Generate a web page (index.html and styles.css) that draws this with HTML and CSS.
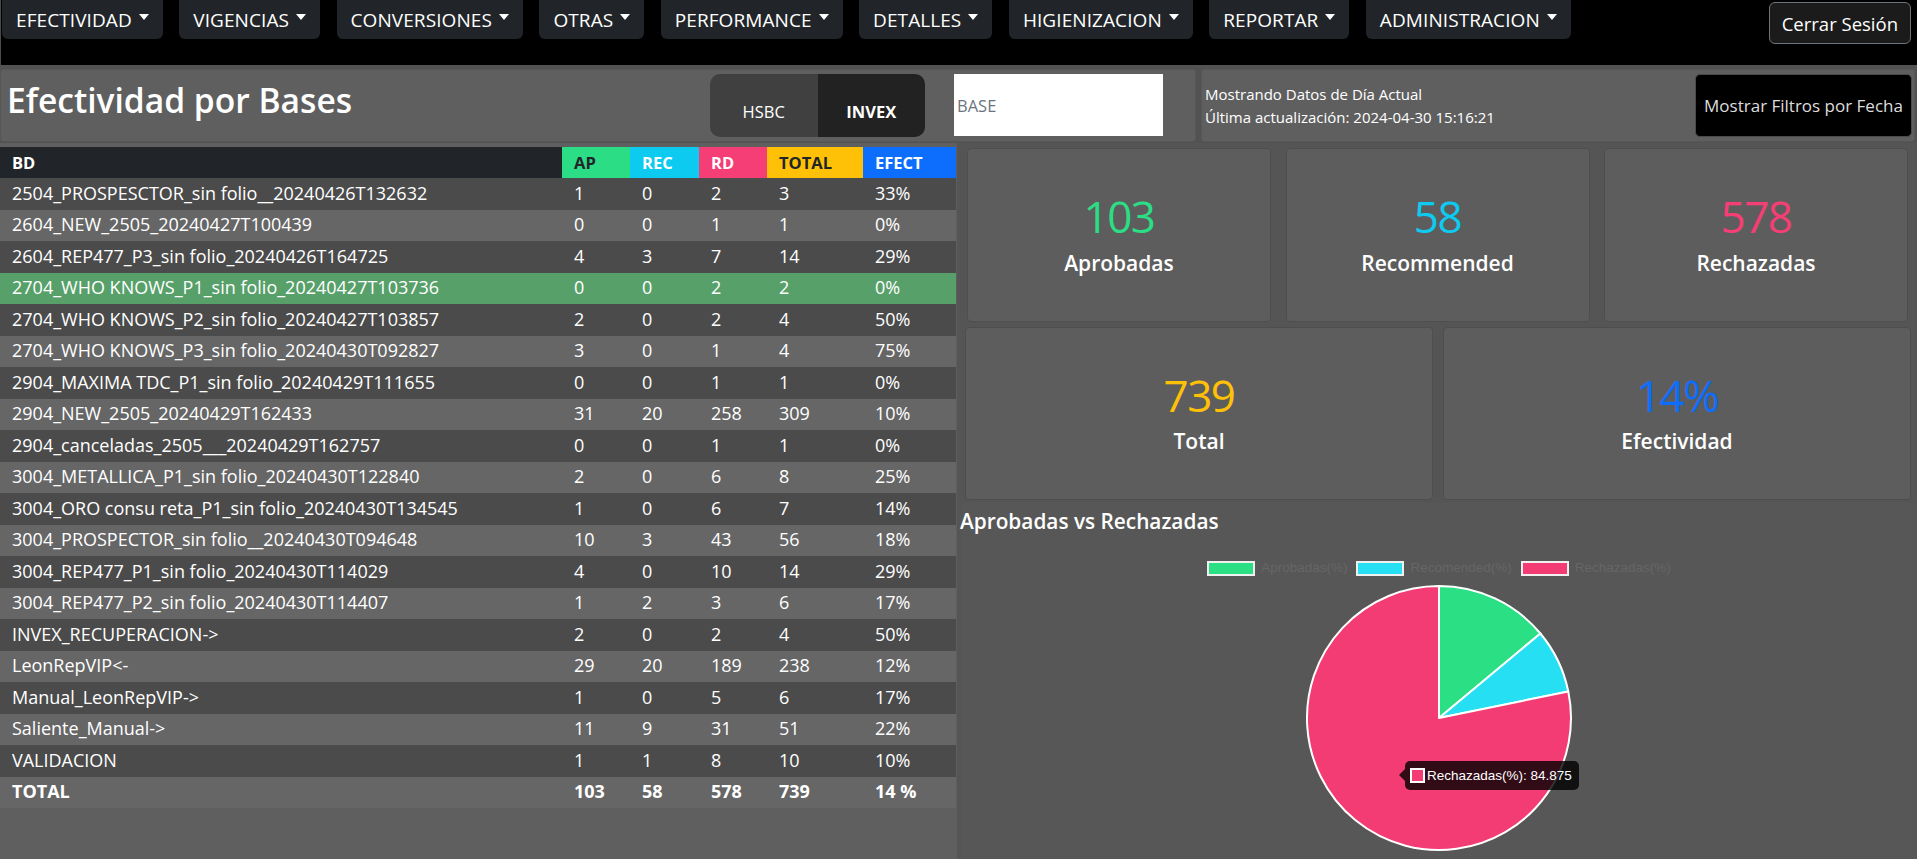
FILE: index.html
```html
<!DOCTYPE html>
<html lang="es">
<head>
<meta charset="utf-8">
<title>Efectividad por Bases</title>
<link rel="stylesheet" href="styles.css">
</head>
<body>
<nav class="topbar">
  <div class="menu">
    <button class="menu-btn">EFECTIVIDAD<span class="caret"></span></button>
    <button class="menu-btn">VIGENCIAS<span class="caret"></span></button>
    <button class="menu-btn">CONVERSIONES<span class="caret"></span></button>
    <button class="menu-btn">OTRAS<span class="caret"></span></button>
    <button class="menu-btn">PERFORMANCE<span class="caret"></span></button>
    <button class="menu-btn">DETALLES<span class="caret"></span></button>
    <button class="menu-btn">HIGIENIZACION<span class="caret"></span></button>
    <button class="menu-btn">REPORTAR<span class="caret"></span></button>
    <button class="menu-btn">ADMINISTRACION<span class="caret"></span></button>
  </div>
  <button class="logout">Cerrar Sesión</button>
</nav>

<header class="header">
  <div class="panel title-panel">
    <h1 class="page-title">Efectividad por Bases</h1>
    <div class="toggle">
      <span class="toggle-opt">HSBC</span>
      <span class="toggle-opt active">INVEX</span>
    </div>
    <input class="base-input" type="text" placeholder="BASE">
  </div>
  <div class="panel info-panel">
    <div class="info-text">
      <div>Mostrando Datos de Día Actual</div>
      <div>Última actualización: 2024-04-30 15:16:21</div>
    </div>
    <button class="filter-btn">Mostrar Filtros por Fecha</button>
  </div>
</header>

<main class="main">
  <section class="table-col">
    <table class="data-table">
      <colgroup>
        <col class="c-bd"><col class="c-ap"><col class="c-rec"><col class="c-rd"><col class="c-total"><col class="c-efect">
      </colgroup>
      <thead>
        <tr>
          <th class="h-bd">BD</th>
          <th class="h-ap">AP</th>
          <th class="h-rec">REC</th>
          <th class="h-rd">RD</th>
          <th class="h-total">TOTAL</th>
          <th class="h-efect">EFECT</th>
        </tr>
      </thead>
      <tbody>
        <tr><td>2504_PROSPESCTOR_sin folio__20240426T132632</td><td>1</td><td>0</td><td>2</td><td>3</td><td>33%</td></tr>
        <tr><td>2604_NEW_2505_20240427T100439</td><td>0</td><td>0</td><td>1</td><td>1</td><td>0%</td></tr>
        <tr><td>2604_REP477_P3_sin folio_20240426T164725</td><td>4</td><td>3</td><td>7</td><td>14</td><td>29%</td></tr>
        <tr class="hover"><td>2704_WHO KNOWS_P1_sin folio_20240427T103736</td><td>0</td><td>0</td><td>2</td><td>2</td><td>0%</td></tr>
        <tr><td>2704_WHO KNOWS_P2_sin folio_20240427T103857</td><td>2</td><td>0</td><td>2</td><td>4</td><td>50%</td></tr>
        <tr><td>2704_WHO KNOWS_P3_sin folio_20240430T092827</td><td>3</td><td>0</td><td>1</td><td>4</td><td>75%</td></tr>
        <tr><td>2904_MAXIMA TDC_P1_sin folio_20240429T111655</td><td>0</td><td>0</td><td>1</td><td>1</td><td>0%</td></tr>
        <tr><td>2904_NEW_2505_20240429T162433</td><td>31</td><td>20</td><td>258</td><td>309</td><td>10%</td></tr>
        <tr><td>2904_canceladas_2505___20240429T162757</td><td>0</td><td>0</td><td>1</td><td>1</td><td>0%</td></tr>
        <tr><td>3004_METALLICA_P1_sin folio_20240430T122840</td><td>2</td><td>0</td><td>6</td><td>8</td><td>25%</td></tr>
        <tr><td>3004_ORO consu reta_P1_sin folio_20240430T134545</td><td>1</td><td>0</td><td>6</td><td>7</td><td>14%</td></tr>
        <tr><td>3004_PROSPECTOR_sin folio__20240430T094648</td><td>10</td><td>3</td><td>43</td><td>56</td><td>18%</td></tr>
        <tr><td>3004_REP477_P1_sin folio_20240430T114029</td><td>4</td><td>0</td><td>10</td><td>14</td><td>29%</td></tr>
        <tr><td>3004_REP477_P2_sin folio_20240430T114407</td><td>1</td><td>2</td><td>3</td><td>6</td><td>17%</td></tr>
        <tr><td>INVEX_RECUPERACION-&gt;</td><td>2</td><td>0</td><td>2</td><td>4</td><td>50%</td></tr>
        <tr><td>LeonRepVIP&lt;-</td><td>29</td><td>20</td><td>189</td><td>238</td><td>12%</td></tr>
        <tr><td>Manual_LeonRepVIP-&gt;</td><td>1</td><td>0</td><td>5</td><td>6</td><td>17%</td></tr>
        <tr><td>Saliente_Manual-&gt;</td><td>11</td><td>9</td><td>31</td><td>51</td><td>22%</td></tr>
        <tr><td>VALIDACION</td><td>1</td><td>1</td><td>8</td><td>10</td><td>10%</td></tr>
        <tr class="total-row"><td>TOTAL</td><td>103</td><td>58</td><td>578</td><td>739</td><td>14 %</td></tr>
      </tbody>
    </table>
  </section>

  <section class="stats-col">
    <div class="cards">
      <div class="card-row three">
        <div class="card"><div class="num green">103</div><div class="label">Aprobadas</div></div>
        <div class="card"><div class="num cyan">58</div><div class="label">Recommended</div></div>
        <div class="card"><div class="num pink">578</div><div class="label">Rechazadas</div></div>
      </div>
      <div class="card-row two">
        <div class="card"><div class="num yellow">739</div><div class="label">Total</div></div>
        <div class="card"><div class="num blue">14%</div><div class="label">Efectividad</div></div>
      </div>
    </div>

    <div class="chart">
      <h2 class="chart-title">Aprobadas vs Rechazadas</h2>
      <div class="legend">
        <span class="legend-item"><span class="swatch sw-green"></span>Aprobadas(%)</span>
        <span class="legend-item"><span class="swatch sw-cyan"></span>Recomended(%)</span>
        <span class="legend-item"><span class="swatch sw-pink"></span>Rechazadas(%)</span>
      </div>
      <div class="pie-wrap">
        <svg class="pie" width="270" height="270" viewBox="0 0 270 270">
          <path d="M135,135 L135,3 A132,132 0 0 1 236.4,50.5 Z" fill="#2bdf84" stroke="#fff" stroke-width="2" stroke-linejoin="round"/>
          <path d="M135,135 L236.4,50.5 A132,132 0 0 1 264.3,108.5 Z" fill="#27dff3" stroke="#fff" stroke-width="2" stroke-linejoin="round"/>
          <path d="M135,135 L264.3,108.5 A132,132 0 1 1 135,3 Z" fill="#f33c73" stroke="#fff" stroke-width="2" stroke-linejoin="round"/>
        </svg>
      </div>
      <div class="tooltip"><span class="tip-box"></span>Rechazadas(%): 84.875</div>
    </div>
  </section>
</main>
</body>
</html>
```
FILE: styles.css
```css
* { box-sizing: border-box; }
html, body { margin: 0; padding: 0; }
body {
  width: 1917px;
  height: 859px;
  overflow: hidden;
  background: #555555;
  color: #fff;
  font-family: "Open Sans", "Noto Sans", sans-serif;
}

/* ---------- top bar ---------- */
.topbar {
  height: 65px;
  background: #000;
  display: flex;
  justify-content: space-between;
  align-items: flex-start;
  padding: 0 6px 0 1px;
  border-left: 1px solid #4a4a4a;
}
.menu { display: flex; gap: 16.5px; }
.menu-btn {
  font-family: inherit;
  font-size: 19px;
  letter-spacing: 0.08px;
  color: #fff;
  background: #212529;
  border: 0;
  height: 39px;
  padding: 0 14px 0 14px;
  border-radius: 0 0 6px 6px;
  display: flex;
  align-items: center;
  white-space: nowrap;
}
.caret {
  display: inline-block;
  width: 0; height: 0;
  margin-left: 7px;
  margin-bottom: 6px;
  border-left: 5px solid transparent;
  border-right: 5px solid transparent;
  border-top: 6px solid #fff;
}
.logout {
  margin-top: 2px;
  height: 42px;
  padding: 0 12px;
  font-family: inherit;
  font-size: 18.5px;
  color: #fff;
  background: #1b1b1b;
  border: 1px solid #6c757d;
  border-radius: 6px;
}

/* ---------- header ---------- */
.header {
  display: grid;
  grid-template-columns: 1196px 1fr;
  column-gap: 5px;
  height: 78px;
  padding: 4px 2px 1px 0;
  background: #525252;
}
.panel {
  background: #5f5f5f;
  border: 1px solid #575757;
  border-radius: 3px;
}
.title-panel {
  display: flex;
  align-items: flex-start;
  padding: 4px 32px 0 6px;
}
.page-title {
  flex: 1;
  margin: 6px 0 0 0;
  font-size: 33.6px;
  font-weight: 600;
  line-height: 1.2;
}
.toggle {
  display: flex;
  width: 215px;
  height: 63px;
  border-radius: 10px;
  overflow: hidden;
  margin-right: 29px;
}
.toggle-opt {
  flex: 1;
  display: flex;
  align-items: center;
  justify-content: center;
  padding-top: 13px;
  font-size: 16.5px;
  line-height: 24px;
  background: #404040;
  color: #fff;
}
.toggle-opt.active { background: #222222; font-weight: 700; }
.base-input {
  width: 209px;
  height: 62px;
  border: 0;
  background: #fff;
  padding: 0 3px;
  font-family: inherit;
  font-size: 16.5px;
  color: #333;
}
.base-input::placeholder { color: #6c757d; }

.info-panel {
  display: flex;
  justify-content: space-between;
  align-items: flex-start;
  padding: 4px 2px 0 3px;
}
.info-text {
  padding-top: 9px;
  font-size: 15px;
  line-height: 23px;
}
.filter-btn {
  width: 217px;
  height: 63px;
  background: #000;
  color: #ddd;
  border: 1px solid #4a4a4a;
  border-radius: 5px;
  font-family: inherit;
  font-size: 17px;
  padding: 0;
}

/* ---------- main ---------- */
.main {
  display: grid;
  grid-template-columns: 957px 1fr;
  column-gap: 4px;
  height: 716px;
}
.table-col {
  background: #5f5f5f;
  padding-top: 4px;
}
.data-table {
  width: 956px;
  border-collapse: collapse;
  table-layout: fixed;
  font-size: 18px;
}
.c-bd { width: 562px; }
.c-ap { width: 68px; }
.c-rec { width: 69px; }
.c-rd { width: 68px; }
.c-total { width: 96px; }
.c-efect { width: 93px; }
.data-table th {
  height: 31px;
  padding: 0 0 0 12px;
  text-align: left;
  font-size: 16.5px;
  font-weight: 700;
}
.data-table td {
  height: 31.5px;
  padding: 0 0 0 12px;
  white-space: nowrap;
  line-height: 1.2;
}
.h-bd { background: #212529; color: #fff; }
.h-ap { background: #2bdd84; color: #212529; }
.h-rec { background: #0dcaf0; color: #fff; }
.h-rd { background: #f53d76; color: #fff; }
.h-total { background: #ffc107; color: #212529; }
.h-efect { background: #0d6efd; color: #fff; }
.data-table tbody tr:nth-child(odd) { background: #4b4b4b; }
.data-table tbody tr:nth-child(even) { background: #666666; }
.data-table tbody tr.hover { background: #58a06a; }
.data-table tbody tr.total-row td { font-weight: 700; }

/* ---------- stats ---------- */
.stats-col {
  display: flex;
  flex-direction: column;
}
.cards {
  background: #555555;
  padding: 5px 0 3px 0;
  display: flex;
  flex-direction: column;
  gap: 5px;
}
.card-row { display: flex; }
.card-row.three { padding: 0 9px 0 6px; gap: 14.5px; height: 174px; }
.card-row.two { padding: 0 6px 0 4px; gap: 10px; height: 173px; }
.card {
  flex: 1;
  background: #5d5d5d;
  border: 1px solid #4e4e4e;
  border-radius: 4px;
  display: flex;
  flex-direction: column;
  align-items: center;
  justify-content: center;
}
.num {
  font-size: 44px;
  letter-spacing: -1.5px;
  line-height: 1.2;
  font-weight: 400;
  margin-top: -4px;
}
.label {
  margin-top: 8px;
  font-size: 21px;
  font-weight: 600;
  line-height: 1.2;
}
.green { color: #2bdd84; }
.cyan { color: #0dcaf0; }
.pink { color: #f53d76; }
.yellow { color: #ffc107; }
.blue { color: #0d6efd; }

/* ---------- chart ---------- */
.chart {
  position: relative;
  flex: 1;
  background: #575757;
  padding-top: 6px;
}
.chart-title {
  margin: 0 0 0 -1px;
  font-size: 20.8px;
  font-weight: 600;
  line-height: 24px;
}
.legend {
  display: flex;
  justify-content: center;
  gap: 9px;
  margin-top: 27px;
  font-family: "Liberation Sans", Arial, sans-serif;
  font-size: 13.5px;
  color: #666;
  line-height: 16px;
}
.legend-item { display: flex; align-items: center; gap: 6px; }
.swatch {
  width: 48px;
  height: 15px;
  border: 2px solid #f0f0f0;
}
.sw-green { background: #2bdf84; }
.sw-cyan { background: #27dff3; }
.sw-pink { background: #f33c73; }
.pie-wrap {
  display: flex;
  justify-content: center;
  margin-top: 7px;
}
.pie { display: block; }
.tooltip {
  position: absolute;
  left: 444px;
  top: 258px;
  height: 29px;
  padding: 0 7px 0 5px;
  display: flex;
  align-items: center;
  gap: 2px;
  background: rgba(0, 0, 0, 0.8);
  border-radius: 5px;
  font-family: "Liberation Sans", Arial, sans-serif;
  font-size: 13.5px;
  color: #fff;
  white-space: nowrap;
}
.tooltip::before {
  content: "";
  position: absolute;
  left: -6px;
  top: 8px;
  border-top: 6px solid transparent;
  border-bottom: 6px solid transparent;
  border-right: 6px solid rgba(0, 0, 0, 0.8);
}
.tip-box {
  width: 15px;
  height: 15px;
  border: 2px solid #fff;
  background: #f33c73;
}
```
